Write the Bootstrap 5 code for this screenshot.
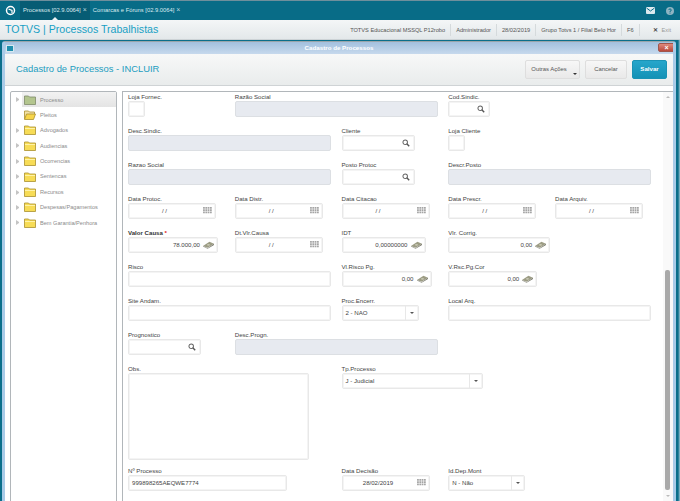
<!doctype html>
<html lang="pt">
<head>
<meta charset="utf-8">
<title>TOTVS | Processos Trabalhistas</title>
<link href="https://cdn.jsdelivr.net/npm/bootstrap@5.3.0/dist/css/bootstrap.min.css" rel="stylesheet">
<style>
html,body{height:501px;overflow:hidden;}
body{background:linear-gradient(90deg,#0b6f8b 0,#0b6f8b 676px,#0b6f8b 678px,#9cc3d2 680px);font-family:"Liberation Sans",Arial,sans-serif;font-size:6px;color:#333;width:680px;}
.topbar{height:20px;background:#086c87;border-top:1px solid #6f8f9c;}
.tabitem{height:19px;color:#dcebf0;font-size:5.8px;padding:0 3px;white-space:nowrap;}
.tabitem.activo{background:#075c74;position:relative;}
.tabitem.activo::after{content:"";position:absolute;left:50%;bottom:0;margin-left:-3px;border:3px solid transparent;border-bottom-color:#eef3f5;border-top:0;}
.tabx{font-size:7px;margin-left:2px;color:#b9d6df;}
.homebtn{width:20px;height:19px;}
.sideico{width:20px;height:19px;}
.titlebar{height:20px;background:linear-gradient(#f4f6f7,#e3e8ea);border-bottom:1px solid #cdd3d6;}
.apptitle{color:#17a0c4;font-size:10.6px;padding-left:5px;white-space:nowrap;}
.stat{color:#555;font-size:5.65px;padding:0 5px;border-left:1px solid #d5dadc;height:12px;line-height:12px;white-space:nowrap;}
.stat:first-child{border-left:0;}
.stat.saida{padding-left:13px;color:#999;}
.stat.saida b{color:#444;margin-right:4px;}
.shell{height:460px;margin:1px 4px 0 2px;background:#fff;border:3px solid #a9cbe8;border-top:1px solid #9aa5ab;border-bottom:0;border-radius:3px 3px 0 0;overflow:hidden;}
.wincap{height:12px;margin:0 -3px;background:linear-gradient(#a3c0de,#c6d9ed);position:relative;color:#fff;font-weight:700;font-size:6.2px;}
.winico{position:absolute;left:4px;top:3px;width:8px;height:7px;background:#1f8fae;border:1px solid #d6e8f0;}
.winclose{position:absolute;right:1px;top:1px;width:17px;height:9px;background:linear-gradient(#e08a7c,#b9493c);border:1px solid #a0554c;border-radius:2px;color:#fff;font-size:7px;line-height:7px;text-align:center;}
.actions{height:32px;background:linear-gradient(#f7f8f8,#e9ecec);border-bottom:1px solid #cfd3d5;padding:0 6px 0 11px;}
.formtitle{color:#1c9dc0;font-size:9.4px;white-space:nowrap;}
.actgroup{gap:5px;}
.actbtn{height:19px;font-size:5.9px;color:#555;background:linear-gradient(#f7f7f7,#e9e9e9);border:1px solid #dedede;border-radius:2px;padding:0;line-height:1;position:relative;}
.actbtn.bo1{width:55px;padding-right:7px;}
.actbtn.bo2{width:42px;}
.actbtn.salvar{width:35px;background:linear-gradient(#26a6cb,#1492b6);border-color:#1a93b5;color:#fff;font-weight:700;font-size:6.1px;}
.caretico{position:absolute;right:2px;bottom:3px;border:2.5px solid transparent;border-top-color:#333;border-bottom:0;}
.workarea{height:420px;padding-top:5px;gap:5px;}
.treepane{width:107px;margin-left:5px;height:420px;background:#fff;border:1px solid #b1b6ba;border-radius:2px;}
.treerow{height:15.4px;font-size:5.6px;color:#8b8b8b;padding-left:5px;white-space:nowrap;}
.treeinner{height:100%;padding-left:2px;}
.treeinner.sel{background:linear-gradient(#f2f2f2,#e4e4e4);}
.arrowico{width:3px;flex:none;margin-right:3px;border-left:3px solid #c4c4c4;border-top:2.5px solid transparent;border-bottom:2.5px solid transparent;height:5px;}
.arrowblank{width:3px;flex:none;margin-right:3px;}
.foldico{width:12px;height:10px;margin-right:4px;flex:none;}
.formpane{width:551px;height:420px;background:#fff;border:1px solid #b1b6ba;border-right:0;border-bottom:0;position:relative;overflow:hidden;}
.fgrid{display:grid;grid-template-columns:repeat(5,106.75px);grid-auto-rows:34px;padding:1px 0 0 5px;}
.fld{min-width:0;}
.lbl{display:block;font-size:6.1px;line-height:8px;height:8px;color:#444;white-space:nowrap;}
.lbl.bold{font-weight:700;color:#333;}
.req{color:#e02020;}
.inp{height:16px;background:#fff;border:1px solid #e8e8e8;box-shadow:inset 0 0 0 1px #f4f4f4;border-radius:2px;font-size:6.1px;color:#444;padding:0 3px;white-space:nowrap;}
.inp.off{background:#e7eaf0;border-color:#dcdfe3;box-shadow:none;}
.inp svg{flex:none;}
.datev{flex:1;text-align:center;padding-right:6px;}
.numv{flex:1;text-align:right;padding-right:3px;}
.combosep{height:100%;border-left:1px solid #e8e8e8;width:13px;margin-right:-3px;flex:none;}
.combosep::after{content:"";border:2.5px solid transparent;border-top-color:#555;border-bottom:0;}
.icolupa{width:8px;height:8px;margin-right:1px;}
.icocal{width:9px;height:8px;}
.icomoney{width:11px;height:8px;}
.w17{width:17px}.w42{width:42px}.w73{width:73px}.w77{width:77px}.w84{width:84px}.w88{width:88px}.w89{width:89px}.w90{width:90px}.w102{width:102px}.w141{width:141px}.w159{width:159px}.w181{width:181px}.w203{width:203px}
.s2{grid-column:span 2}
.c1{grid-column-start:1}.c2{grid-column-start:2}.c3{grid-column-start:3}.c4{grid-column-start:4}.c5{grid-column-start:5}
.c2.s2{grid-column:2 / span 2}.c1.s2{grid-column:1 / span 2}.c4.s2{grid-column:4 / span 2}
.tallf{grid-row:span 3;}
.inp.alto{height:87px;}
.scrolltrack{position:absolute;right:0;top:0;bottom:0;width:10px;background:#f9f9f9;}
.scrollthumb{position:absolute;right:3px;top:178px;height:220px;width:5px;background:#a9a9a9;border-radius:2px;}
.scrollarr{position:absolute;right:3px;width:0;border:2.5px solid transparent;}
.scrollarr.up{top:4px;border-bottom-color:#bbb;border-top:0;}
.scrollarr.dn{top:403px;border-top-color:#bbb;border-bottom:0;}
</style>
</head>
<body>
<svg width="0" height="0" class="position-absolute">
<defs>
<symbol id="lupa" viewBox="0 0 10 10"><circle cx="4" cy="4" r="2.8" fill="#fff" stroke="#666" stroke-width="1.3"/><path d="M6 6l3 3" stroke="#555" stroke-width="1.8"/></symbol>
<symbol id="cal" viewBox="0 0 10 9"><path fill="#a5a5a5" d="M0 0h2v2H0zM2.600 0h2v2h-2zM5.200 0h2v2h-2zM7.800 0h2v2h-2zM0 2.500h2v2H0zM2.600 2.500h2v2h-2zM5.200 2.500h2v2h-2zM7.800 2.500h2v2h-2zM0 5h2v2H0zM2.600 5h2v2h-2zM5.200 5h2v2h-2zM7.800 5h2v2h-2z"/></symbol>
<symbol id="money" viewBox="0 0 12 8"><path d="M0 5l7-4.500 5 2-7 4.500z" fill="#9c9c84"/><path d="M0 5l5 2.500 7-5v1.500l-7 4-5-2.500z" fill="#77776a"/><ellipse cx="6" cy="3.800" rx="1.600" ry="1" fill="#c9c9b4"/></symbol>
<symbol id="pasta" viewBox="0 0 12 10"><path d="M.5 2V1h4l1 1h6v7.500H.5z" fill="#f7dc56" stroke="#a98f2e" stroke-width=".8"/><path d="M1 3.500h10" stroke="#fff3a8"/></symbol>
<symbol id="pastav" viewBox="0 0 12 10"><path d="M.5 2V1h4l1 1h6v7.500H.5z" fill="#b3c58e" stroke="#7f8a6a" stroke-width=".8"/></symbol>
<symbol id="pastaa" viewBox="0 0 12 10"><path d="M.5 9V1h4l1 1h5v2" fill="#f3e2a8" stroke="#a98f2e" stroke-width=".8"/><path d="M.5 9.500l2-5.500h9l-2 5.500z" fill="#f7d54a" stroke="#a98f2e" stroke-width=".8"/></symbol>
</defs>
</svg>

<div class="topbar d-flex align-items-center">
  <div class="homebtn d-flex align-items-center justify-content-center">
    <svg width="11" height="11" viewBox="0 0 11 11"><circle cx="5.500" cy="5.500" r="4" fill="none" stroke="#fff" stroke-width="1.500"/><path d="M3.500 4l3.500 1.500 0 2.500" fill="none" stroke="#fff" stroke-width="1.200"/></svg>
  </div>
  <div class="tabitem activo d-flex align-items-center">Processos [02.9.0064]<span class="tabx">×</span></div>
  <div class="tabitem d-flex align-items-center">Comarcas e Fóruns [02.9.0064]<span class="tabx">×</span></div>
  <div class="ms-auto d-flex">
    <div class="sideico d-flex align-items-center justify-content-center"><svg width="9" height="7" viewBox="0 0 9 7"><rect width="9" height="7" rx="1" fill="#dce9ee"/><path d="M.5 1l4 3 4-3" fill="none" stroke="#0b6f8b"/></svg></div>
    <div class="sideico d-flex align-items-center justify-content-center"><svg width="8" height="8" viewBox="0 0 8 8"><circle cx="4" cy="4" r="4" fill="#8fb4c2"/><path d="M2.800 3a1.200 1.200 0 1 1 1.200 1.300V5M4 5.600v1" stroke="#0b6f8b" fill="none"/></svg></div>
  </div>
</div>

<div class="titlebar d-flex align-items-center">
  <div class="apptitle">TOTVS | Processos Trabalhistas</div>
  <div class="ms-auto d-flex align-items-center pe-1">
    <div class="stat">TOTVS Educacional MSSQL P12robo</div>
    <div class="stat">Administrador</div>
    <div class="stat">28/02/2019</div>
    <div class="stat">Grupo Totvs 1 / Filial Belo Hor</div>
    <div class="stat">F6</div>
    <div class="stat saida"><b>✕</b>Exit</div>
  </div>
</div>

<div class="shell">
  <div class="wincap d-flex align-items-center justify-content-center">
    <span class="winico"></span>Cadastro de Processos<span class="winclose">×</span>
  </div>
  <div class="actions d-flex align-items-center">
    <div class="formtitle">Cadastro de Processos - INCLUIR</div>
    <div class="ms-auto d-flex align-items-center actgroup">
      <button class="btn actbtn bo1" type="button">Outras Ações<span class="caretico"></span></button>
      <button class="btn actbtn bo2" type="button">Cancelar</button>
      <button class="btn actbtn salvar" type="button">Salvar</button>
    </div>
  </div>
  <div class="workarea d-flex">
    <div class="treepane">
      <div class="treerow d-flex align-items-center"><span class="arrowico"></span><div class="treeinner sel flex-grow-1 d-flex align-items-center"><svg class="foldico"><use href="#pastav"/></svg>Processo</div></div>
      <div class="treerow d-flex align-items-center"><span class="arrowblank"></span><div class="treeinner flex-grow-1 d-flex align-items-center"><svg class="foldico"><use href="#pastaa"/></svg>Pleitos</div></div>
      <div class="treerow d-flex align-items-center"><span class="arrowico"></span><div class="treeinner flex-grow-1 d-flex align-items-center"><svg class="foldico"><use href="#pasta"/></svg>Advogados</div></div>
      <div class="treerow d-flex align-items-center"><span class="arrowico"></span><div class="treeinner flex-grow-1 d-flex align-items-center"><svg class="foldico"><use href="#pasta"/></svg>Audiencias</div></div>
      <div class="treerow d-flex align-items-center"><span class="arrowico"></span><div class="treeinner flex-grow-1 d-flex align-items-center"><svg class="foldico"><use href="#pasta"/></svg>Ocorrencias</div></div>
      <div class="treerow d-flex align-items-center"><span class="arrowico"></span><div class="treeinner flex-grow-1 d-flex align-items-center"><svg class="foldico"><use href="#pasta"/></svg>Sentencas</div></div>
      <div class="treerow d-flex align-items-center"><span class="arrowico"></span><div class="treeinner flex-grow-1 d-flex align-items-center"><svg class="foldico"><use href="#pasta"/></svg>Recursos</div></div>
      <div class="treerow d-flex align-items-center"><span class="arrowico"></span><div class="treeinner flex-grow-1 d-flex align-items-center"><svg class="foldico"><use href="#pasta"/></svg>Despesas/Pagamentos</div></div>
      <div class="treerow d-flex align-items-center"><span class="arrowico"></span><div class="treeinner flex-grow-1 d-flex align-items-center"><svg class="foldico"><use href="#pasta"/></svg>Bem Garantia/Penhora</div></div>
    </div>
    <div class="formpane">
      <div class="fgrid">
        <div class="fld c1"><span class="lbl">Loja Fornec.</span><div class="inp w17"></div></div>
        <div class="fld c2 s2"><span class="lbl">Razão Social</span><div class="inp off w203"></div></div>
        <div class="fld c4"><span class="lbl">Cod.Sindic.</span><div class="inp w42 d-flex align-items-center justify-content-end"><svg class="icolupa"><use href="#lupa"/></svg></div></div>

        <div class="fld c1 s2"><span class="lbl">Desc.Sindic.</span><div class="inp off w203"></div></div>
        <div class="fld c3"><span class="lbl">Cliente</span><div class="inp w73 d-flex align-items-center justify-content-end"><svg class="icolupa"><use href="#lupa"/></svg></div></div>
        <div class="fld c4"><span class="lbl">Loja Cliente</span><div class="inp w17"></div></div>

        <div class="fld c1 s2"><span class="lbl">Razao Social</span><div class="inp off w203"></div></div>
        <div class="fld c3"><span class="lbl">Posto Protoc</span><div class="inp w73 d-flex align-items-center justify-content-end"><svg class="icolupa"><use href="#lupa"/></svg></div></div>
        <div class="fld c4 s2"><span class="lbl">Descr.Posto</span><div class="inp off w203"></div></div>

        <div class="fld c1"><span class="lbl">Data Protoc.</span><div class="inp w88 d-flex align-items-center"><span class="datev">/ /</span><svg class="icocal"><use href="#cal"/></svg></div></div>
        <div class="fld c2"><span class="lbl">Data Distr.</span><div class="inp w88 d-flex align-items-center"><span class="datev">/ /</span><svg class="icocal"><use href="#cal"/></svg></div></div>
        <div class="fld c3"><span class="lbl">Data Citacao</span><div class="inp w88 d-flex align-items-center"><span class="datev">/ /</span><svg class="icocal"><use href="#cal"/></svg></div></div>
        <div class="fld c4"><span class="lbl">Data Prescr.</span><div class="inp w88 d-flex align-items-center"><span class="datev">/ /</span><svg class="icocal"><use href="#cal"/></svg></div></div>
        <div class="fld c5"><span class="lbl">Data Arquiv.</span><div class="inp w88 d-flex align-items-center"><span class="datev">/ /</span><svg class="icocal"><use href="#cal"/></svg></div></div>

        <div class="fld c1"><span class="lbl bold">Valor Causa <span class="req">*</span></span><div class="inp w90 d-flex align-items-center"><span class="numv">78.000,00</span><svg class="icomoney"><use href="#money"/></svg></div></div>
        <div class="fld c2"><span class="lbl">Dt.Vlr.Causa</span><div class="inp w88 d-flex align-items-center"><span class="datev">/ /</span><svg class="icocal"><use href="#cal"/></svg></div></div>
        <div class="fld c3"><span class="lbl">IDT</span><div class="inp w84 d-flex align-items-center"><span class="numv">0,00000000</span><svg class="icomoney"><use href="#money"/></svg></div></div>
        <div class="fld c4"><span class="lbl">Vlr. Corrig.</span><div class="inp w102 d-flex align-items-center"><span class="numv">0,00</span><svg class="icomoney"><use href="#money"/></svg></div></div>

        <div class="fld c1 s2"><span class="lbl">Risco</span><div class="inp w203"></div></div>
        <div class="fld c3"><span class="lbl">Vl.Risco Pg.</span><div class="inp w90 d-flex align-items-center"><span class="numv">0,00</span><svg class="icomoney"><use href="#money"/></svg></div></div>
        <div class="fld c4"><span class="lbl">V.Rsc.Pg.Cor</span><div class="inp w89 d-flex align-items-center"><span class="numv">0,00</span><svg class="icomoney"><use href="#money"/></svg></div></div>

        <div class="fld c1 s2"><span class="lbl">Site Andam.</span><div class="inp w203"></div></div>
        <div class="fld c3"><span class="lbl">Proc.Encerr.</span><div class="inp w77 d-flex align-items-center"><span class="flex-grow-1">2 - NAO</span><span class="combosep d-flex align-items-center justify-content-center"></span></div></div>
        <div class="fld c4 s2"><span class="lbl">Local Arq.</span><div class="inp w203"></div></div>

        <div class="fld c1"><span class="lbl">Prognostico</span><div class="inp w73 d-flex align-items-center justify-content-end"><svg class="icolupa"><use href="#lupa"/></svg></div></div>
        <div class="fld c2 s2"><span class="lbl">Desc.Progn.</span><div class="inp off w203"></div></div>

        <div class="fld c1 s2 tallf"><span class="lbl">Obs.</span><div class="inp alto w181"></div></div>
        <div class="fld c3 s2"><span class="lbl">Tp.Processo</span><div class="inp w141 d-flex align-items-center"><span class="flex-grow-1">J - Judicial</span><span class="combosep d-flex align-items-center justify-content-center"></span></div></div>

        <div class="fld c1 s2"><span class="lbl">Nº Processo</span><div class="inp w159 d-flex align-items-center">999898265AEQWE7774</div></div>
        <div class="fld c3"><span class="lbl">Data Decisão</span><div class="inp w88 d-flex align-items-center"><span class="datev">28/02/2019</span><svg class="icocal"><use href="#cal"/></svg></div></div>
        <div class="fld c4"><span class="lbl">Id.Dep.Mont</span><div class="inp w77 d-flex align-items-center"><span class="flex-grow-1">N - Não</span><span class="combosep d-flex align-items-center justify-content-center"></span></div></div>
      </div>
      <div class="scrolltrack">
        <span class="scrollarr up"></span>
        <div class="scrollthumb"></div>
        <span class="scrollarr dn"></span>
      </div>
    </div>
  </div>
</div>
</body>
</html>
